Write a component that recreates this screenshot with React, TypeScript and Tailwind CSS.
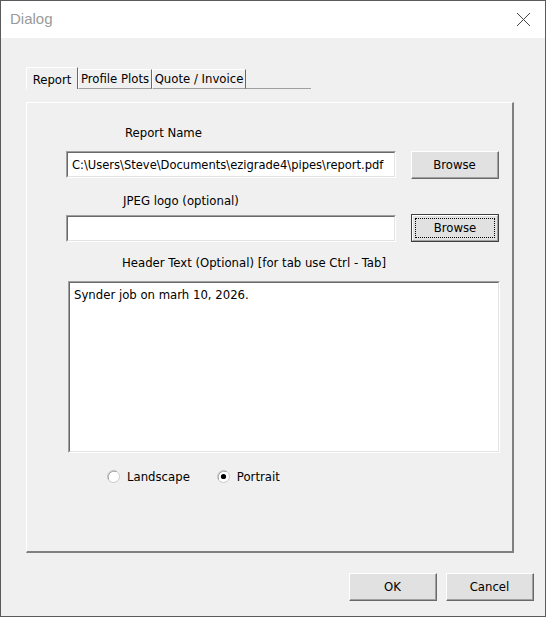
import React from "react";

const font = { fontFamily: '"DejaVu Sans Condensed", "DejaVu Sans", sans-serif' };

function ClassicButton({ label, isDefault = false }: { label: string; isDefault?: boolean }) {
  if (isDefault) {
    return (
      <div className="h-[28px] w-[88px] border border-[#404040] bg-[#e1e1e1]">
        <div className="h-full w-full border-t border-l border-t-white border-l-white border-r border-b border-r-[#a0a0a0] border-b-[#a0a0a0] p-[2px]">
          <div className="flex h-full w-full items-center justify-center border border-dotted border-black text-[13px] text-black">
            {label}
          </div>
        </div>
      </div>
    );
  }
  return (
    <div className="h-[28px] w-[88px] border border-t-white border-l-white border-r-[#696969] border-b-[#696969] bg-[#e1e1e1]">
      <div className="flex h-full w-full items-center justify-center border-r border-b border-r-[#a0a0a0] border-b-[#a0a0a0] text-[13px] text-black">
        {label}
      </div>
    </div>
  );
}

function Sunken({ className, children }: { className: string; children?: React.ReactNode }) {
  return (
    <div className={`${className} border border-t-[#a0a0a0] border-l-[#a0a0a0] border-r-white border-b-white`}>
      <div className="h-full w-full border border-t-[#696969] border-l-[#696969] border-r-[#e3e3e3] border-b-[#e3e3e3] bg-white">
        {children}
      </div>
    </div>
  );
}

function Radio({ checked, label }: { checked: boolean; label: string }) {
  return (
    <div className="flex items-center gap-[7px]">
      <svg width="13" height="13" viewBox="0 0 13 13">
        <circle cx="6.5" cy="6.5" r="6" fill="white" stroke="#c8c8c8" />
        <path d="M1.6 9.5 A6 6 0 0 1 9.5 1.6" fill="none" stroke="#a0a0a0" />
        {checked && <circle cx="6.5" cy="6.5" r="2.6" fill="black" />}
      </svg>
      <span className="text-[13px] text-black">{label}</span>
    </div>
  );
}

export default function App() {
  return (
    <div style={font} className="h-[617px] w-[546px] overflow-hidden border border-[#5b5b5b] bg-[#f0f0f0]">
      {/* title bar */}
      <div className="flex h-[37px] items-center justify-between bg-white pl-[9px] pr-[14px]">
        <span style={{ fontFamily: '"Liberation Sans", Arial, sans-serif' }} className="text-[15px] text-[#9a9a9a]">
          Dialog
        </span>
        <svg width="15" height="15" viewBox="0 0 15 15">
          <path d="M1 1 L14 14 M14 1 L1 14" stroke="#444" strokeWidth="1" />
        </svg>
      </div>

      <div className="pl-[25px]">
        {/* tabs */}
        <div className="mt-[29px] flex items-end">
          <div className="flex h-[22px] w-[52px] items-start justify-center border-t border-l border-t-white border-l-white border-r border-r-[#696969] pt-[2px] text-[13px] text-black">
            Report
          </div>
          <div className="flex h-[20px] w-[74px] items-center justify-center border-t border-l border-t-white border-l-white border-r border-r-[#696969] border-b border-b-[#a0a0a0] text-[13px] text-black">
            Profile Plots
          </div>
          <div className="flex h-[20px] w-[94px] items-center justify-center border-t border-l border-t-white border-l-white border-r border-r-[#696969] border-b border-b-[#a0a0a0] text-[13px] text-black">
            Quote / Invoice
          </div>
          <div className="h-[20px] w-[65px] border-b border-b-[#a0a0a0]" />
        </div>

        {/* panel */}
        <div className="mt-[13px] h-[451px] w-[488px] border-t border-l border-t-white border-l-white border-r-2 border-b-2 border-r-[#808080] border-b-[#808080]">
          <div className="flex flex-col">
            <div className="mt-[22px] h-[16px] pl-[98px] text-[13px] leading-[16px] text-black">Report Name</div>
            <div className="mt-[10px] flex items-start pl-[39px]">
              <Sunken className="h-[27px] w-[330px]">
                <div className="px-[4px] pt-[3px] text-[12.8px] leading-[17px] text-black">
                  C:\Users\Steve\Documents\ezigrade4\pipes\report.pdf
                </div>
              </Sunken>
              <div className="ml-[15px]">
                <ClassicButton label="Browse" />
              </div>
            </div>
            <div className="mt-[14px] h-[16px] pl-[96px] text-[13px] leading-[16px] text-black">JPEG logo (optional)</div>
            <div className="mt-[6px] flex items-start pl-[39px]">
              <Sunken className="h-[27px] w-[330px]" />
              <div className="-mt-[1px] ml-[15px]">
                <ClassicButton label="Browse" isDefault />
              </div>
            </div>
            <div className="mt-[13px] h-[16px] pl-[95px] text-[13px] leading-[16px] text-black">
              Header Text (Optional) [for tab use Ctrl - Tab]
            </div>
            <div className="mt-[10px] pl-[41px]">
              <Sunken className="h-[172px] w-[432px]">
                <div className="px-[4px] pt-[3px] text-[13px] leading-[17px] text-black">Synder job on marh 10, 2026.</div>
              </Sunken>
            </div>
            <div className="mt-[14px] flex items-center gap-[27px] pl-[80px]">
              <Radio checked={false} label="Landscape" />
              <Radio checked label="Portrait" />
            </div>
          </div>
        </div>
      </div>

      {/* dialog buttons */}
      <div className="mt-[20px] flex justify-end gap-[9px] pr-[11px]">
        <ClassicButton label="OK" />
        <ClassicButton label="Cancel" />
      </div>
    </div>
  );
}
